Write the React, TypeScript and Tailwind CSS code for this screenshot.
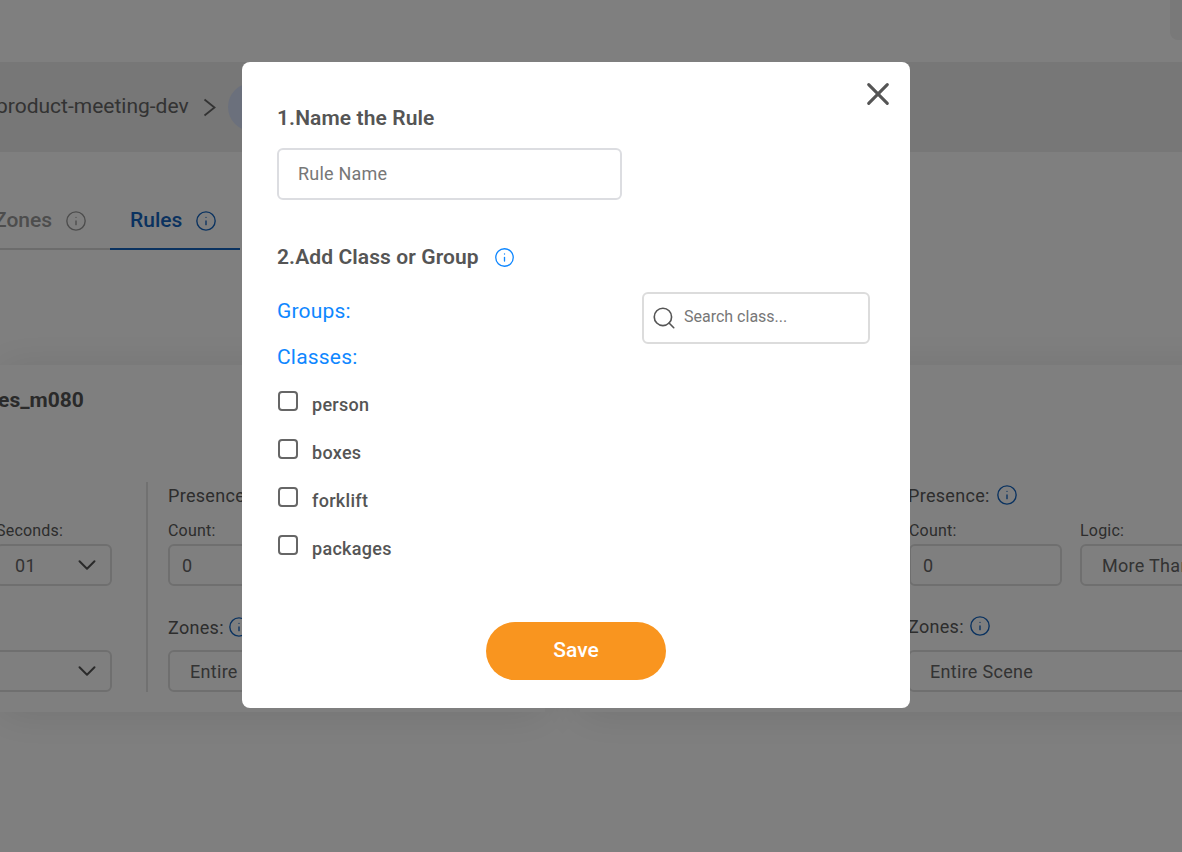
import { ChevronDown, Info, Search, X } from 'lucide-react'

const classes = ['person', 'boxes', 'forklift', 'packages']

function Field({ label, value, width, pad, chevron }: { label: string; value: string; width: string; pad: string; chevron?: boolean }) {
  return (
    <div className={`shrink-0 ${width}`}>
      <div className="h-[22px] text-[16px] leading-[22px] tracking-[0.2px] text-[#5a5a5a]">{label}</div>
      <div className={`mt-[2px] flex h-[42px] items-center justify-between rounded-[6px] border-2 border-[#dedede] pr-[8px] text-[18px] tracking-[0.3px] text-[#666] ${pad}`}>
        <span>{value}</span>
        {chevron && <ChevronDown size={30} strokeWidth={1.6} className="text-[#555]" />}
      </div>
    </div>
  )
}

function Background() {
  return (
    <div className="h-[852px] overflow-hidden bg-white font-['Roboto',sans-serif]">
      {/* Top header */}
      <div className="flex h-[62px] justify-end">
        <div className="h-[40px] w-[12px] rounded-bl-[8px] bg-[#f2f2f2]" />
      </div>

      {/* Breadcrumb */}
      <div className="flex h-[90px] items-center bg-[#eeeeee] pb-[2px]">
        <span className="ml-[-4px] mt-[2px] text-[21px] text-[#666]">product-meeting-dev</span>
        <svg width="13" height="19" viewBox="0 0 13 19" fill="none" className="ml-[14px] mt-[2px] text-[#666]">
          <path d="M1.5 1.5 L11.5 9.5 L1.5 17.5" stroke="currentColor" strokeWidth="1.8" />
        </svg>
        <div className="ml-[12px] mt-[2px] h-[48px] w-[48px] rounded-full bg-[#d6e0f8]" />
      </div>

      {/* Tabs */}
      <div className="mt-[38px] flex h-[60px]">
        <div className="flex w-[110px] items-center gap-[13px] border-b-2 border-[#d8d8d8] pt-[3px]">
          <span className="ml-[-6px] text-[21px] font-medium text-[#9a9a9a]">Zones</span>
          <Info size={22} strokeWidth={1.5} className="text-[#9a9a9a]" />
        </div>
        <div className="flex w-[130px] items-center gap-[13px] border-b-2 border-[#1565c0] pl-[20px] pt-[3px]">
          <span className="text-[21px] font-medium text-[#1565c0]">Rules</span>
          <Info size={22} strokeWidth={1.5} className="text-[#1565c0]" />
        </div>
      </div>

      {/* Rule cards */}
      <div className="mt-[115px] flex h-[347px] w-[1400px] gap-[35px]">
        <div className="h-full w-[545px] shrink-0 bg-white shadow-[0_2px_40px_rgba(0,0,0,0.1)]">
          <div className="ml-[-54px] mt-[20px] h-[32px] text-[21px] font-bold text-[#555]">Classes_m080</div>
          <div className="mt-[65px] flex h-[210px]">
            <div className="flex w-[146px] shrink-0 flex-col pt-[38px]">
              <Field label="Seconds:" value="01" width="ml-[-4px] w-[116px]" pad="pl-[17px]" chevron />
              <div className="ml-[-10px] mr-[34px] mt-[64px] flex h-[42px] items-center justify-end rounded-[6px] border-2 border-[#dedede] pr-[8px]">
                <ChevronDown size={30} strokeWidth={1.6} className="text-[#555]" />
              </div>
            </div>
            <div className="w-[2px] bg-[#e2e2e2]" />
            <div className="ml-[20px] flex-1">
              <div className="h-[26px] text-[18px] tracking-[0.3px] text-[#5a5a5a]">Presence:</div>
              <div className="mt-[12px]">
                <Field label="Count:" value="0" width="w-[150px]" pad="pl-[12px]" />
              </div>
              <div className="mt-[29px] flex h-[24px] items-center gap-[4px] text-[18px] tracking-[0.3px] text-[#5a5a5a]">
                Zones: <Info size={22} strokeWidth={1.5} className="text-[#1565c0]" />
              </div>
              <div className="mt-[11px] flex h-[42px] w-[300px] items-center rounded-[6px] border-2 border-[#dedede] pl-[20px] text-[18px] tracking-[0.3px] text-[#666]">
                Entire Scene
              </div>
            </div>
          </div>
        </div>
        <div className="h-full flex-1 bg-white pl-[329px] pt-[117px] shadow-[0_2px_40px_rgba(0,0,0,0.1)]">
          <div className="ml-[-1px] flex h-[26px] items-center gap-[6px] text-[18px] tracking-[0.3px] text-[#5a5a5a]">
            Presence: <Info size={22} strokeWidth={1.5} className="text-[#1565c0]" />
          </div>
          <div className="mt-[12px] flex gap-[18px]">
            <Field label="Count:" value="0" width="w-[153px]" pad="pl-[12px]" />
            <Field label="Logic:" value="More Than" width="w-[160px]" pad="pl-[20px]" />
          </div>
          <div className="ml-[-1px] mt-[28px] flex h-[24px] items-center gap-[5px] text-[18px] tracking-[0.3px] text-[#5a5a5a]">
            Zones: <Info size={22} strokeWidth={1.5} className="text-[#1565c0]" />
          </div>
          <div className="ml-[-1px] mt-[12px] flex h-[42px] w-[400px] items-center rounded-[6px] border-2 border-[#dedede] pl-[20px] text-[18px] tracking-[0.3px] text-[#666]">
            Entire Scene
          </div>
        </div>
      </div>
    </div>
  )
}

function RuleModal() {
  return (
    <div className="absolute left-[242px] top-[62px] flex h-[646px] w-[668px] flex-col rounded-[8px] bg-white px-[35px] font-['Roboto',sans-serif] text-[#555]">
      <button className="absolute right-[20px] top-[20px] text-[#555]">
        <X size={24} strokeWidth={2} className="h-[24px] w-[24px] scale-[1.55]" />
      </button>

      <h2 className="mt-[43px] text-[21px] font-semibold leading-[26px] tracking-[0.1px]">1.Name the Rule</h2>
      <input
        placeholder="Rule Name"
        className="mt-[17px] h-[52px] w-[345px] rounded-[6px] border-2 border-[#dcdde1] pb-[2px] pl-[19px] text-[18px] tracking-[0.2px] outline-none placeholder:text-[#777]"
      />

      <div className="mt-[44px] flex items-center gap-[15px]">
        <h2 className="text-[21px] font-semibold leading-[26px] tracking-[0.1px]">2.Add Class or Group</h2>
        <Info size={21} strokeWidth={1.5} className="text-[#0f87ff]" />
      </div>

      <div className="mt-[22px] flex justify-between pr-[5px]">
        <div className="pt-[6px]">
          <div className="text-[21px] leading-[26px] tracking-[0.2px] text-[#0f87ff]">Groups:</div>
          <div className="mt-[20px] text-[21px] leading-[26px] tracking-[0.2px] text-[#0f87ff]">Classes:</div>
        </div>
        <div className="flex h-[52px] w-[228px] items-center gap-[7px] rounded-[6px] border-2 border-[#dcdcdc] pl-[7px]">
          <Search size={26} strokeWidth={1.5} className="text-[#555]" />
          <input placeholder="Search class..." className="mb-[2px] w-[170px] text-[16px] outline-none placeholder:text-[#777]" />
        </div>
      </div>

      <div className="mt-[22px] flex flex-col gap-[22px]">
        {classes.map((name) => (
          <label key={name} className="flex h-[26px] items-center gap-[14px]">
            <span className="mb-[8px] ml-[1px] h-[20px] w-[20px] rounded-[4px] border-2 border-[#666]" />
            <span className="text-[18px] font-medium leading-[26px] tracking-[0.3px]">{name}</span>
          </label>
        ))}
      </div>

      <button className="mx-auto mt-[60px] h-[58px] w-[180px] rounded-full bg-[#f9951f] text-[21px] font-medium text-white">
        Save
      </button>
    </div>
  )
}

export default function App() {
  return (
    <div className="relative h-[852px] overflow-hidden">
      <Background />
      <div className="absolute inset-0 bg-black/50" />
      <RuleModal />
    </div>
  )
}
